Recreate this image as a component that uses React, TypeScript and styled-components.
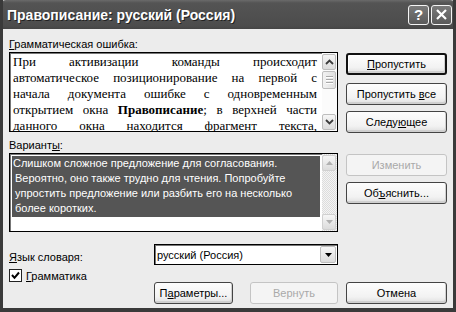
import React from "react";
import styled, { createGlobalStyle, css } from "styled-components";

const Global = createGlobalStyle`
  html, body { margin: 0; padding: 0; background: #ececec; }
  body { font-family: "Liberation Sans", Arial, sans-serif; font-size: 11px; color: #000; }
  * { box-sizing: border-box; }
`;

const Window = styled.div`
  width: 456px;
  height: 312px;
  background: #ececec;
  border-left: 3px solid #3a3a3a;
  border-right: 3px solid #3a3a3a;
  border-bottom: 4px solid #3a3a3a;
  display: flex;
  flex-direction: column;
  overflow: hidden;
`;

const TitleBar = styled.div`
  height: 29px;
  margin: 0 -3px;
  background: linear-gradient(#6a6a6a 0px, #545454 3px, #4c4c4c 26px, #444 29px);
  border-radius: 6px 6px 0 0;
  display: flex;
  align-items: center;
  padding: 0 4px 0 7px;
  flex: none;
`;

const Title = styled.div`
  flex: 1;
  color: #fff;
  font-family: "Liberation Sans Narrow", "Liberation Sans", Arial, sans-serif;
  font-weight: bold;
  font-size: 14px;
  text-shadow: 1px 1px 0 #222;
`;

const TitleButton = styled.div`
  width: 21px;
  height: 20px;
  margin-left: 2px;
  border: 1px solid #f4f4f4;
  border-radius: 3px;
  background: linear-gradient(#7a7a7a, #5a5a5a);
  color: #fff;
  display: flex;
  align-items: center;
  justify-content: center;
  font-weight: bold;
  font-size: 15px;
`;

const Body = styled.div`
  flex: 1;
  padding: 8px 6px 0 6px;
  display: flex;
  flex-direction: column;
`;

const Top = styled.div`
  display: flex;
  gap: 8px;
`;

const LeftCol = styled.div`
  width: 329px;
  display: flex;
  flex-direction: column;
`;

const RightCol = styled.div`
  width: 101px;
  display: flex;
  flex-direction: column;
  padding-top: 16px;
`;

const Label = styled.div<{ $mt?: number }>`
  height: 14px;
  line-height: 14px;
  margin-bottom: 1px;
  margin-top: ${(p) => p.$mt ?? 0}px;
  white-space: nowrap;
`;

const U = styled.span`
  text-decoration: underline;
`;

const Box = styled.div<{ $h: number }>`
  height: ${(p) => p.$h}px;
  border: 1px solid #000;
  box-shadow: inset 1px 1px 0 #777;
  background: #fff;
  display: flex;
  overflow: hidden;
`;

const ErrorText = styled.div`
  flex: 1;
  padding: 1px 5px 0 3px;
  font-family: "Liberation Serif", "Times New Roman", serif;
  font-size: 13px;
  line-height: 16px;
`;

const JLine = styled.div`
  white-space: nowrap;
  display: flex;
  justify-content: space-between;
`;

const Scroll = styled.div<{ $disabled?: boolean }>`
  width: 15px;
  display: flex;
  flex-direction: column;
  padding: 1px 1px 1px 0;
  background: ${(p) =>
    p.$disabled
      ? "repeating-conic-gradient(#f4f4f4 0% 25%, #dcdcdc 0% 50%) 0 0 / 2px 2px"
      : "#fbfbfb"};
`;

const ScrollBtn = styled.div<{ $disabled?: boolean }>`
  height: 16px;
  border: 1px solid ${(p) => (p.$disabled ? "#d0d0d0" : "#bdbdbd")};
  border-radius: 2px;
  background: linear-gradient(#f6f6f6, #dcdcdc);
  display: flex;
  align-items: center;
  justify-content: center;
  flex: none;
`;

const Thumb = styled.div`
  margin-top: 1px;
  height: 18px;
  border: 1px solid #bdbdbd;
  border-radius: 2px;
  background: linear-gradient(90deg, #f2f2f2, #e0e0e0);
  display: flex;
  flex-direction: column;
  align-items: center;
  justify-content: center;
  gap: 1px;
  flex: none;
`;

const Grip = styled.div`
  width: 7px;
  height: 1px;
  background: #a8a8a8;
  box-shadow: 0 1px 0 #fff;
  margin-bottom: 1px;
`;

const Spacer = styled.div`
  flex: 1;
`;

const Chevron = ({ up, color }: { up?: boolean; color: string }) => (
  <svg width="9" height="6" viewBox="0 0 9 6">
    <path
      d={up ? "M1 5 L4.5 1.5 L8 5" : "M1 1 L4.5 4.5 L8 1"}
      fill="none"
      stroke={color}
      strokeWidth="1.8"
    />
  </svg>
);

const Tri = ({ up, color }: { up?: boolean; color: string }) => (
  <svg width="7" height="4" viewBox="0 0 7 4">
    <path d={up ? "M0 4 L3.5 0 L7 4 Z" : "M0 0 L3.5 4 L7 0 Z"} fill={color} />
  </svg>
);

const VariantsArea = styled.div`
  flex: 1;
  padding: 2px 2px 0 2px;
`;

const Selected = styled.div`
  background: #555;
  color: #fff;
  padding: 0 0 1px 1px;
  font-size: 11px;
  line-height: 15px;
`;

const SelLine = styled.div<{ $indent?: boolean }>`
  white-space: nowrap;
  padding-left: ${(p) => (p.$indent ? "2px" : "0")};
`;

const Button = styled.div<{ $default?: boolean; $disabled?: boolean; $w?: number }>`
  width: ${(p) => (p.$w ? `${p.$w}px` : "101px")};
  height: 22px;
  border: 1px solid #444;
  border-radius: 3px;
  background: linear-gradient(#fdfdfd, #f2f2f2 70%, #dedede);
  box-shadow: inset -1px -2px 0 #cfcfcf;
  display: flex;
  align-items: center;
  justify-content: center;
  white-space: nowrap;
  font-size: 11px;
  color: ${(p) => (p.$disabled ? "#a9a9a9" : "#000")};
  ${(p) =>
    p.$disabled &&
    css`
      border-color: #c4c4c4;
      box-shadow: none;
      background: #f4f4f4;
    `}
  ${(p) =>
    p.$default &&
    css`
      border: 2px solid #111;
      box-shadow: inset -1px -2px 0 #cfcfcf, inset 1px 1px 0 #fff;
    `}
`;

const RBtnWrap = styled.div<{ $mt: number }>`
  margin-top: ${(p) => p.$mt}px;
`;

const Bottom = styled.div`
  display: grid;
  grid-template-columns: 145px 184px;
  margin-top: 12px;
`;

const BottomLabel = styled.div`
  padding-top: 7px;
`;

const Combo = styled.div`
  height: 21px;
  border: 1px solid #000;
  box-shadow: inset 1px 1px 0 #777;
  background: #fff;
  display: flex;
  align-items: center;
  padding: 1px 1px 1px 2px;
`;

const ComboText = styled.div`
  flex: 1;
  font-size: 11px;
`;

const ComboBtn = styled.div`
  width: 16px;
  height: 17px;
  border: 1px solid #bdbdbd;
  border-radius: 2px;
  background: linear-gradient(#f6f6f6, #dcdcdc);
  display: flex;
  align-items: center;
  justify-content: center;
`;

const CheckRow = styled.div`
  display: flex;
  align-items: center;
  gap: 4px;
  margin-top: 4px;
  height: 13px;
`;

const CheckBox = styled.div`
  width: 13px;
  height: 13px;
  border: 1px solid #222;
  background: #fff;
  display: flex;
  align-items: center;
  justify-content: center;
`;

const ButtonRow = styled.div`
  display: flex;
  margin-left: 145px;
`;

const GapX = styled.div<{ $w: number }>`
  width: ${(p) => p.$w}px;
`;

const errorLines: string[][] = [
  ["При", "активизации", "команды", "происходит"],
  ["автоматическое", "позиционирование", "на", "первой", "с"],
  ["начала", "документа", "ошибке", "с", "одновременным"],
  [],
  ["данного", "окна", "находится", "фрагмент", "текста,"],
];

export default function App() {
  return (
    <>
      <Global />
      <Window>
        <TitleBar>
          <Title>Правописание: русский (Россия)</Title>
          <TitleButton>?</TitleButton>
          <TitleButton>
            <svg width="13" height="13" viewBox="0 0 13 13">
              <path d="M2 2 L11 11 M11 2 L2 11" stroke="#fff" strokeWidth="2.2" />
            </svg>
          </TitleButton>
        </TitleBar>
        <Body>
          <Top>
            <LeftCol>
              <Label>
                <U>Г</U>рамматическая ошибка:
              </Label>
              <Box $h={80}>
                <ErrorText>
                  {errorLines.map((line, i) => (
                    <JLine key={i}>
                      {i === 3 ? (
                        <>
                          <span>открытием</span>
                          <span>окна</span>
                          <span>
                            <b>Правописание</b>;
                          </span>
                          <span>в</span>
                          <span>верхней</span>
                          <span>части</span>
                        </>
                      ) : (
                        line.map((w, j) => <span key={j}>{w}</span>)
                      )}
                    </JLine>
                  ))}
                </ErrorText>
                <Scroll>
                  <ScrollBtn>
                    <Chevron up color="#3c3c3c" />
                  </ScrollBtn>
                  <Thumb>
                    <Grip />
                    <Grip />
                    <Grip />
                  </Thumb>
                  <Spacer />
                  <ScrollBtn>
                    <Chevron color="#3c3c3c" />
                  </ScrollBtn>
                </Scroll>
              </Box>
              <Label $mt={6}>
                Вариант<U>ы</U>:
              </Label>
              <Box $h={79}>
                <VariantsArea>
                  <Selected>
                    <SelLine>Слишком сложное предложение для согласования.</SelLine>
                    <SelLine $indent>Вероятно, оно также трудно для чтения. Попробуйте</SelLine>
                    <SelLine $indent>упростить предложение или разбить его на несколько</SelLine>
                    <SelLine $indent>более коротких.</SelLine>
                  </Selected>
                </VariantsArea>
                <Scroll $disabled>
                  <ScrollBtn $disabled>
                    <Tri up color="#b0b0b0" />
                  </ScrollBtn>
                  <Spacer />
                  <ScrollBtn $disabled>
                    <Tri color="#b0b0b0" />
                  </ScrollBtn>
                </Scroll>
              </Box>
            </LeftCol>
            <RightCol>
              <Button $default>
                <span>
                  <U>П</U>ропустить
                </span>
              </Button>
              <RBtnWrap $mt={8}>
                <Button>
                  <span>
                    Пропустить <U>в</U>се
                  </span>
                </Button>
              </RBtnWrap>
              <RBtnWrap $mt={6}>
                <Button>
                  <span>
                    Следу<U>ю</U>щее
                  </span>
                </Button>
              </RBtnWrap>
              <RBtnWrap $mt={21}>
                <Button $disabled>Изменить</Button>
              </RBtnWrap>
              <RBtnWrap $mt={6}>
                <Button>
                  <span>
                    Об<U>ъ</U>яснить...
                  </span>
                </Button>
              </RBtnWrap>
            </RightCol>
          </Top>
          <Bottom>
            <BottomLabel>
              <U>Я</U>зык словаря:
            </BottomLabel>
            <Combo>
              <ComboText>русский (Россия)</ComboText>
              <ComboBtn>
                <Tri color="#000" />
              </ComboBtn>
            </Combo>
          </Bottom>
          <CheckRow>
            <CheckBox>
              <svg width="9" height="9" viewBox="0 0 9 9">
                <path d="M1 4 L3.5 6.8 L8 1.5" fill="none" stroke="#000" strokeWidth="2" />
              </svg>
            </CheckBox>
            <span>
              <U>Г</U>рамматика
            </span>
          </CheckRow>
          <ButtonRow>
            <Button $w={79}>
              <span>
                П<U>а</U>раметры...
              </span>
            </Button>
            <GapX $w={17} />
            <Button $w={88} $disabled>
              Вернуть
            </Button>
            <GapX $w={8} />
            <Button $w={101}>Отмена</Button>
          </ButtonRow>
        </Body>
      </Window>
    </>
  );
}
